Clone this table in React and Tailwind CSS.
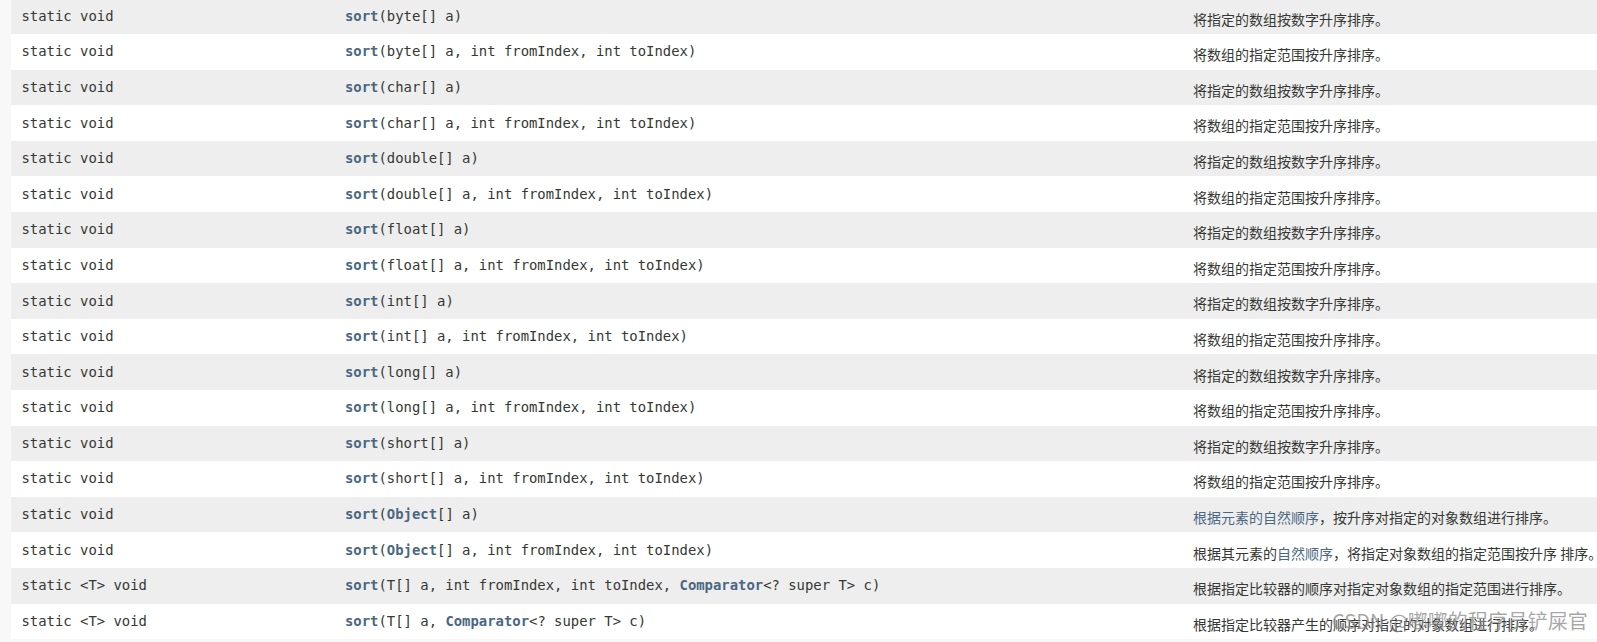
import React from 'react';

const mono = "font-['DejaVu_Sans_Mono','Liberation_Mono',monospace]";
const cjk = "font-['Noto_Sans_CJK_SC','Noto_Sans',sans-serif]";

const DESC_ALL = '将指定的数组按数字升序排序。';
const DESC_RANGE = '将数组的指定范围按升序排序。';

const rows = [
  { mod: 'static void', args: [['byte[] a']], desc: DESC_ALL },
  { mod: 'static void', args: [['byte[] a, int fromIndex, int toIndex']], desc: DESC_RANGE },
  { mod: 'static void', args: [['char[] a']], desc: DESC_ALL },
  { mod: 'static void', args: [['char[] a, int fromIndex, int toIndex']], desc: DESC_RANGE },
  { mod: 'static void', args: [['double[] a']], desc: DESC_ALL },
  { mod: 'static void', args: [['double[] a, int fromIndex, int toIndex']], desc: DESC_RANGE },
  { mod: 'static void', args: [['float[] a']], desc: DESC_ALL },
  { mod: 'static void', args: [['float[] a, int fromIndex, int toIndex']], desc: DESC_RANGE },
  { mod: 'static void', args: [['int[] a']], desc: DESC_ALL },
  { mod: 'static void', args: [['int[] a, int fromIndex, int toIndex']], desc: DESC_RANGE },
  { mod: 'static void', args: [['long[] a']], desc: DESC_ALL },
  { mod: 'static void', args: [['long[] a, int fromIndex, int toIndex']], desc: DESC_RANGE },
  { mod: 'static void', args: [['short[] a']], desc: DESC_ALL },
  { mod: 'static void', args: [['short[] a, int fromIndex, int toIndex']], desc: DESC_RANGE },
  {
    mod: 'static void',
    args: [['Object', true], ['[] a']],
    desc: [['根据元素的自然顺序', true], ['，按升序对指定的对象数组进行排序。']],
  },
  {
    mod: 'static void',
    args: [['Object', true], ['[] a, int fromIndex, int toIndex']],
    desc: [['根据其元素的'], ['自然顺序', true], ['，将指定对象数组的指定范围按升序 排序。']],
  },
  {
    mod: 'static <T> void',
    args: [['T[] a, int fromIndex, int toIndex, '], ['Comparator', true], ['<? super T> c']],
    desc: '根据指定比较器的顺序对指定对象数组的指定范围进行排序。',
  },
  {
    mod: 'static <T> void',
    args: [['T[] a, '], ['Comparator', true], ['<? super T> c']],
    desc: '根据指定比较器产生的顺序对指定的对象数组进行排序。',
  },
];

function Row({ row, i }) {
  const desc = typeof row.desc === 'string' ? [[row.desc]] : row.desc;
  return (
    <div className={`flex items-center h-[35.6px] pl-[10.5px] whitespace-nowrap ${i % 2 === 0 ? 'bg-[#eeeeee]' : 'bg-white'}`}>
      <div className={`${mono} w-[323.5px] text-[13.9px] text-[#353833]`}>{row.mod}</div>
      <div className={`${mono} w-[848px] text-[13.9px] text-[#353833]`}>
        <span className="font-bold text-[#4a6782]">sort</span>(
        {row.args.map(([t, link], k) => (
          <span key={k} className={link ? 'font-bold text-[#4a6782]' : ''}>{t}</span>
        ))}
        )
      </div>
      <div className={`${cjk} flex-1 pt-[6px] text-[14px] text-[#353833] overflow-hidden`}>
        {desc.map(([t, link], k) => (
          <span key={k} className={link ? 'text-[#4a6782]' : ''}>{t}</span>
        ))}
      </div>
    </div>
  );
}

export default function App() {
  return (
    <div className="relative w-[1597px] h-[642px] overflow-hidden bg-[#f8f8f8]">
      <div className="ml-[11px] -mt-[1.6px]">
        {rows.map((r, i) => (
          <Row key={i} row={r} i={i} />
        ))}
      </div>
      {/* CSDN watermark */}
      <div className={`${cjk} absolute left-[1332px] top-[607px] text-[20px] leading-[28px] text-[#8a8a8a]/75 whitespace-nowrap`}>
        CSDN @嘟嘟的程序员铲屎官
      </div>
    </div>
  );
}
